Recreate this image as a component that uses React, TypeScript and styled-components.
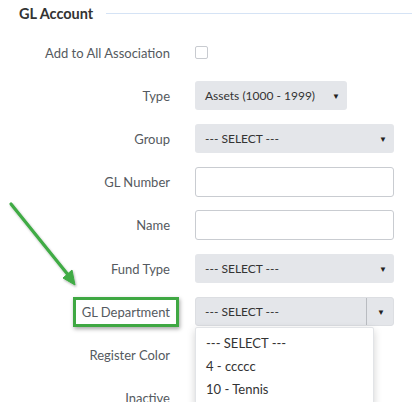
import React from 'react'
import styled, { createGlobalStyle } from 'styled-components'

const GlobalStyle = createGlobalStyle`
  body {
    margin: 0;
    background: #ffffff;
    font-family: 'Lato', 'Liberation Sans', sans-serif;
    overflow: hidden;
  }
`

const Page = styled.div`
  position: relative;
  width: 412px;
  height: 402px;
  overflow: hidden;
`

const Header = styled.div`
  display: flex;
  align-items: center;
  height: 27px;
  padding-left: 19px;
`

const Title = styled.h3`
  margin: 0;
  font-size: 14.5px;
  font-weight: 700;
  color: #333333;
`

const TitleRule = styled.div`
  flex: 1;
  margin-left: 13px;
  border-top: 1px solid #d5e3f5;
`

const Form = styled.div`
  display: flex;
  flex-direction: column;
  padding-top: 4px;
`

const Row = styled.div`
  display: grid;
  grid-template-columns: 170px 199px;
  column-gap: 25px;
  align-items: center;
  height: 43.2px;
`

const Label = styled.div`
  text-align: right;
  font-size: 13px;
  color: #555a60;
`

const Highlight = styled.span`
  display: inline-block;
  padding: 4px 6px 4px 6px;
  margin-right: -9px;
  border: 3px solid #3fa843;
  box-shadow: 1px 2px 4px rgba(0, 0, 0, 0.35);
`

const Checkbox = styled.span`
  display: block;
  width: 11px;
  height: 11px;
  border: 1px solid #c8cbd0;
  border-radius: 2px;
  background: #fff;
`

const Select = styled.div<{ $width?: number }>`
  position: relative;
  display: flex;
  align-items: center;
  justify-content: space-between;
  box-sizing: border-box;
  width: ${(p) => (p.$width ? `${p.$width}px` : '100%')};
  height: 29px;
  padding: 0 7px 0 10px;
  background: #e4e6ea;
  border-radius: 3px;
  font-size: 12px;
  color: #333333;
`

const Caret = styled.span`
  font-size: 8px;
  color: #222;
`

const SplitSelect = styled.div`
  position: relative;
  display: flex;
  height: 29px;
  box-sizing: border-box;
  background: #e4e6ea;
  border: 1px solid #dcdee2;
  border-radius: 3px;
  font-size: 12px;
  color: #333;
`

const SplitValue = styled.div`
  flex: 1;
  display: flex;
  align-items: center;
  padding-left: 9px;
  border-right: 1px solid #b9bcc1;
`

const SplitButton = styled.div`
  width: 26px;
  display: flex;
  align-items: center;
  justify-content: center;
  padding-left: 2px;
  box-sizing: border-box;
`

const Menu = styled.ul`
  position: absolute;
  top: 100%;
  left: -1px;
  width: 177px;
  margin: 2px 0 0;
  padding: 4px 0 6px;
  list-style: none;
  background: #fff;
  border: 1px solid #e2e4e7;
  border-radius: 2px;
  box-shadow: 0 3px 8px rgba(0, 0, 0, 0.18);
  z-index: 5;
`

const MenuItem = styled.li`
  padding: 0 10px;
  height: 23px;
  line-height: 23px;
  font-size: 13px;
  color: #333;
`

const TextInput = styled.div`
  box-sizing: border-box;
  height: 30px;
  border: 1px solid #c9ccd1;
  border-radius: 3px;
  background: #fff;
`

const Annotation = styled.svg`
  position: absolute;
  left: 0;
  top: 0;
  pointer-events: none;
`

const App: React.FC = () => {
  return (
    <Page>
      <GlobalStyle />
      <Header>
        <Title>GL Account</Title>
        <TitleRule />
      </Header>
      <Form>
        <Row>
          <Label>Add to All Association</Label>
          <Checkbox />
        </Row>
        <Row>
          <Label>Type</Label>
          <Select $width={152}>
            Assets (1000 - 1999)
            <Caret>▼</Caret>
          </Select>
        </Row>
        <Row>
          <Label>Group</Label>
          <Select>
            --- SELECT ---
            <Caret>▼</Caret>
          </Select>
        </Row>
        <Row>
          <Label>GL Number</Label>
          <TextInput />
        </Row>
        <Row>
          <Label>Name</Label>
          <TextInput />
        </Row>
        <Row>
          <Label>Fund Type</Label>
          <Select>
            --- SELECT ---
            <Caret>▼</Caret>
          </Select>
        </Row>
        <Row>
          <Label>
            <Highlight>GL Department</Highlight>
          </Label>
          <SplitSelect>
            <SplitValue>--- SELECT ---</SplitValue>
            <SplitButton>
              <Caret>▼</Caret>
            </SplitButton>
            <Menu>
              <MenuItem>--- SELECT ---</MenuItem>
              <MenuItem>4 - ccccc</MenuItem>
              <MenuItem>10 - Tennis</MenuItem>
            </Menu>
          </SplitSelect>
        </Row>
        <Row>
          <Label>Register Color</Label>
          <div />
        </Row>
        <Row>
          <Label>Inactive</Label>
          <div />
        </Row>
      </Form>
      <Annotation width="412" height="402" viewBox="0 0 412 402">
        <defs>
          <filter id="arrowShadow" x="-20%" y="-20%" width="140%" height="140%">
            <feDropShadow dx="1" dy="1.5" stdDeviation="1.2" floodOpacity="0.3" />
          </filter>
        </defs>
        <g filter="url(#arrowShadow)" fill="#3fab44" stroke="#3fab44">
          <line x1="11" y1="204" x2="69" y2="276" strokeWidth="3.2" strokeLinecap="round" />
          <polygon points="75,285 63,278 72,270" strokeWidth="1" strokeLinejoin="round" />
        </g>
      </Annotation>
    </Page>
  )
}

export default App
